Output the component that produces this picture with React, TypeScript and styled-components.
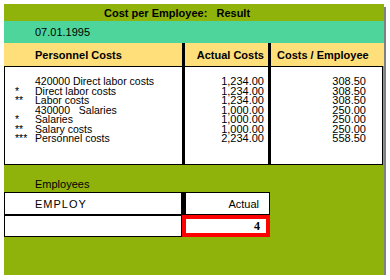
import React from "react";
import styled, { createGlobalStyle } from "styled-components";

const GlobalStyle = createGlobalStyle`
  body {
    margin: 0;
    background: #ffffff;
    font-family: "Liberation Sans", Arial, sans-serif;
  }
`;

const Panel = styled.div`
  margin: 4px 0 0 4px;
  width: 380px;
  height: 271px;
  background: #8fb30b;
  box-shadow: 2px 3px 0 #808080;
  display: flex;
  flex-direction: column;
  font-size: 11px;
  color: #000;
`;

const TitleBar = styled.div`
  height: 17px;
  display: flex;
  align-items: center;
  padding-left: 100px;
  font-weight: bold;
  white-space: pre;
`;

const DateBar = styled.div`
  height: 22px;
  background: #4dd59b;
  display: flex;
  align-items: center;
  padding-left: 31px;
`;

const Table = styled.div`
  display: grid;
  grid-template-columns: 178px 3px 83px 3px 1fr;
  grid-template-rows: 23px 99px;
`;

const HeadCell = styled.div<{ $col: number; $right?: boolean; $pl?: number }>`
  grid-row: 1;
  grid-column: ${(p) => p.$col};
  background: #ffdf7a;
  font-weight: bold;
  display: flex;
  align-items: center;
  justify-content: ${(p) => (p.$right ? "flex-end" : "flex-start")};
  padding: 0 4px 0 ${(p) => p.$pl ?? 6}px;
  white-space: nowrap;
`;

const Divider = styled.div<{ $col: number }>`
  background: #000;
  grid-row: 1 / span 2;
  grid-column: ${(p) => p.$col};
`;

const BodyCell = styled.div<{ $col: number; $first?: boolean; $last?: boolean; $pr?: number }>`
  grid-row: 2;
  grid-column: ${(p) => p.$col};
  background: #fff;
  border-top: 1px solid #000;
  border-bottom: 1px solid #000;
  border-left: ${(p) => (p.$first ? "1px solid #000" : "none")};
  border-right: ${(p) => (p.$last ? "1px solid #000" : "none")};
  margin-right: ${(p) => (p.$last ? "1px" : "0")};
  padding: 10px ${(p) => p.$pr ?? 4}px 0 0;
  text-align: right;
  line-height: 9.5px;
`;

const LabelLine = styled.div`
  display: grid;
  grid-template-columns: 20px 1fr;
  text-align: left;
  white-space: pre;
  padding-left: 10px;
  font-size: 10.5px;
`;

const NumLine = styled.div`
  white-space: pre;
`;

const Section = styled.div`
  padding-top: 10px;
`;

const SectionLabel = styled.div`
  height: 17px;
  padding-left: 31px;
  display: flex;
  align-items: center;
`;

const EmpGrid = styled.div`
  display: grid;
  grid-template-columns: 178px 3px 85px;
  grid-template-rows: 23px 22px;
`;

const EmpCell = styled.div<{ $right?: boolean }>`
  background: #fff;
  border: 1px solid #000;
  display: flex;
  align-items: center;
  justify-content: ${(p) => (p.$right ? "flex-end" : "flex-start")};
  padding: ${(p) => (p.$right ? "0 10px 0 0" : "0 0 0 30px")};
  letter-spacing: ${(p) => (p.$right ? "0" : "1px")};
`;

const BlackBar = styled.div`
  background: #000;
`;

const InputBox = styled.div`
  grid-column: 2 / span 2;
  border: 4px solid #ff0000;
  background: #fff;
  display: flex;
  align-items: center;
  justify-content: flex-end;
  padding-right: 6px;
  font-family: "Liberation Serif", "Times New Roman", serif;
  font-weight: bold;
  font-size: 12px;
`;

const rows = [
  { mark: "", text: "420000 Direct labor costs", actual: "1,234.00", per: "308.50" },
  { mark: "*", text: "Direct labor costs", actual: "1,234.00", per: "308.50" },
  { mark: "**", text: "Labor costs", actual: "1,234.00", per: "308.50" },
  { mark: "", text: "430000   Salaries", actual: "1,000.00", per: "250.00" },
  { mark: "*", text: "Salaries", actual: "1,000.00", per: "250.00" },
  { mark: "**", text: "Salary costs", actual: "1,000.00", per: "250.00" },
  { mark: "***", text: "Personnel costs", actual: "2,234.00", per: "558.50" },
];

export default function App() {
  return (
    <>
      <GlobalStyle />
      <Panel>
        <TitleBar>{"Cost per Employee:   Result"}</TitleBar>
        <DateBar>07.01.1995</DateBar>
        <Table>
          <HeadCell $col={1} $pl={31}>Personnel Costs</HeadCell>
          <Divider $col={2} />
          <HeadCell $col={3} $right>Actual Costs</HeadCell>
          <Divider $col={4} />
          <HeadCell $col={5}>Costs / Employee</HeadCell>
          <BodyCell $col={1} $first>
            {rows.map((r, i) => (
              <LabelLine key={i}>
                <span>{r.mark}</span>
                <span>{r.text}</span>
              </LabelLine>
            ))}
          </BodyCell>
          <BodyCell $col={3}>
            {rows.map((r, i) => (
              <NumLine key={i}>{r.actual}</NumLine>
            ))}
          </BodyCell>
          <BodyCell $col={5} $last $pr={16}>
            {rows.map((r, i) => (
              <NumLine key={i}>{r.per}</NumLine>
            ))}
          </BodyCell>
        </Table>
        <Section>
          <SectionLabel>Employees</SectionLabel>
          <EmpGrid>
            <EmpCell>EMPLOY</EmpCell>
            <BlackBar />
            <EmpCell $right>Actual</EmpCell>
            <EmpCell />
            <InputBox>4</InputBox>
          </EmpGrid>
        </Section>
      </Panel>
    </>
  );
}
